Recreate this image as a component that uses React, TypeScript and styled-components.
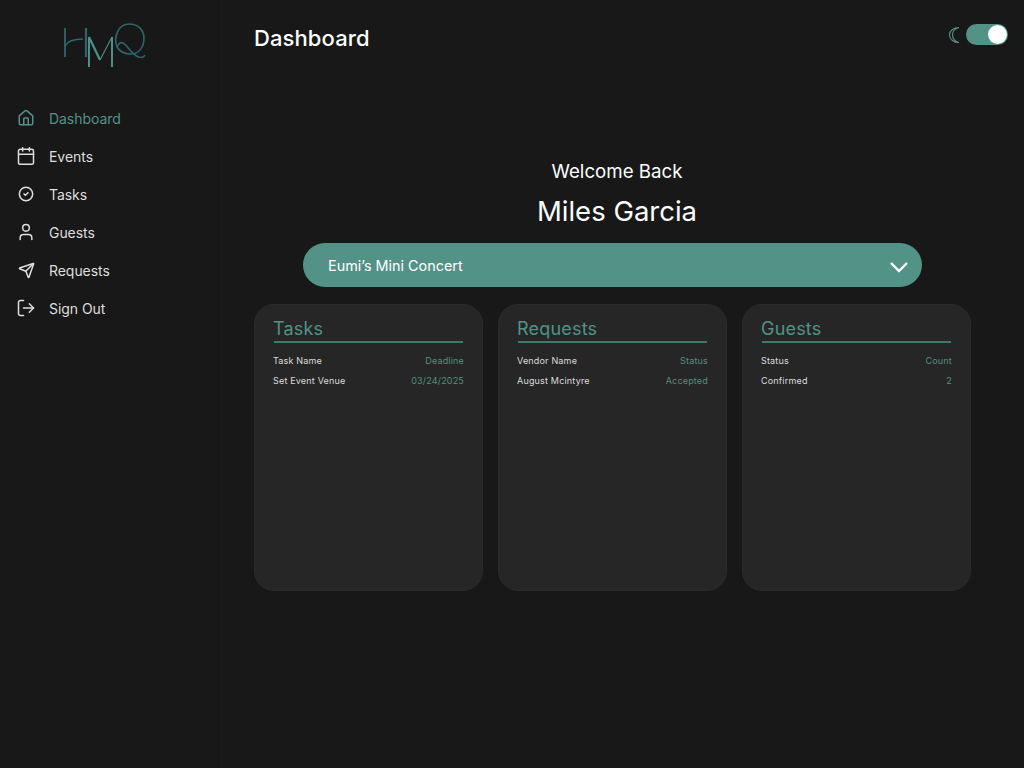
import React from "react";
import styled, { createGlobalStyle } from "styled-components";
import { Home, Calendar, CircleCheck, User, Send, LogOut } from "lucide-react";

const Global = createGlobalStyle`
  html, body { margin: 0; padding: 0; background: #181818; }
  body { font-family: Inter, "Liberation Sans", sans-serif; }
`;

const Page = styled.div`
  width: 1024px;
  height: 768px;
  display: flex;
  overflow: hidden;
  background: #181818;
  color: #fff;
`;

const Sidebar = styled.aside`
  width: 222px;
  flex: none;
  box-sizing: border-box;
  padding-top: 22px;
  border-right: 1px solid #1b1b1b;
`;

const LogoWrap = styled.div`
  display: flex;
  height: 47px;
  padding-left: 63px;
  margin-bottom: 30px;
`;

const Nav = styled.nav`
  display: flex;
  flex-direction: column;
`;

const NavItem = styled.a<{ $active?: boolean }>`
  display: flex;
  align-items: center;
  height: 38px;
  padding-left: 16px;
  gap: 13px;
  font-size: 14px;
  letter-spacing: -0.05px;
  color: ${(p) => (p.$active ? "#539287" : "#dedede")};
`;

const IconSlot = styled.span`
  width: 20px;
  flex: none;
  display: flex;
  justify-content: center;
`;

const Main = styled.main`
  flex: 1;
  min-width: 0;
  display: flex;
  flex-direction: column;
  padding: 0 53px 0 32px;
`;

const Header = styled.header`
  height: 77px;
  display: flex;
  align-items: flex-start;
  justify-content: space-between;
`;

const Title = styled.h1`
  margin: 24px 0 0;
  font-size: 22px;
  line-height: 28px;
  font-weight: 500;
  letter-spacing: 0.1px;
  color: #fff;
`;

const ThemeToggle = styled.div`
  display: flex;
  align-items: center;
  gap: 5px;
  margin: 24px -37px 0 0;
`;

const Moon = styled.span`
  display: flex;
  margin-left: -1px;
`;

const Switch = styled.div`
  width: 42px;
  height: 21px;
  border-radius: 11px;
  background: #539287;
  display: flex;
  justify-content: flex-end;
  align-items: center;
  padding-right: 1px;
  box-sizing: border-box;
`;

const Knob = styled.div`
  width: 19px;
  height: 19px;
  border-radius: 50%;
  background: #fff;
`;

const Welcome = styled.section`
  margin-top: 82px;
  display: flex;
  flex-direction: column;
  align-items: center;
  padding-left: 9px;
`;

const Greeting = styled.div`
  font-size: 18.7px;
  line-height: 26px;
  color: #fff;
`;

const Name = styled.div`
  margin-top: 8px;
  font-size: 27.5px;
  line-height: 36px;
  color: #fff;
`;

const Select = styled.div`
  margin: 14px 0 0 49px;
  width: 619px;
  height: 44px;
  box-sizing: border-box;
  border-radius: 22px;
  background: #539287;
  display: flex;
  align-items: center;
  justify-content: space-between;
  padding: 0 13px 0 25px;
  font-size: 14.4px;
  color: #fff;
`;

const Chevron = styled.svg`
  margin-top: 3px;
`;

const Cards = styled.div`
  margin-top: 17px;
  display: flex;
  gap: 15px;
`;

const Card = styled.div`
  width: 229px;
  height: 287px;
  box-sizing: border-box;
  border-radius: 20px;
  background: #262626;
  border: 1px solid #2b2b2b;
  padding: 12px 18px 0;
`;

const CardTitle = styled.h2`
  margin: 0;
  font-size: 18px;
  line-height: 24px;
  font-weight: 400;
  color: #539287;
  letter-spacing: 0.2px;
`;

const Rule = styled.div`
  height: 2px;
  width: 189px;
  background: #3f766d;
  margin: 0 0 8px 1px;
`;

const Row = styled.div`
  display: flex;
  justify-content: space-between;
  font-size: 9px;
  line-height: 20px;
  color: #dcdcdc;
  letter-spacing: 0.18px;
`;

const RowValue = styled.span`
  color: #50907f;
`;

const Logo = () => (
  <svg width="84" height="47" viewBox="0 0 84 47" fill="none">
    <g stroke="#2f666c">
      <path d="M2 6V35" strokeWidth="1.8" />
      <path d="M2 24C4.5 19 10 17 20 17" strokeWidth="1.5" />
      <path d="M23 6V35" strokeWidth="2.2" />
      <path d="M54 25C50 14 56 2 66 2C76 2 81 9 81 16C81 25 76 32 68 32C62 32 57 30 54 25" strokeWidth="1.6" />
      <path d="M54 25C56 21 58 20 60 21C64 23 66 28 70 31C74 36 80 37 82 33" strokeWidth="1.5" />
    </g>
    <g stroke="#4f8f85">
      <path d="M26 15V45" strokeWidth="2" />
      <path d="M26 15L37 38" strokeWidth="2.2" />
      <path d="M37 38L49 15" strokeWidth="1.1" />
      <path d="M49 15V45" strokeWidth="2" />
    </g>
  </svg>
);

const navItems = [
  { label: "Dashboard", Icon: Home, size: 18, active: true },
  { label: "Events", Icon: Calendar, size: 20 },
  { label: "Tasks", Icon: CircleCheck, size: 16 },
  { label: "Guests", Icon: User, size: 20 },
  { label: "Requests", Icon: Send, size: 17 },
  { label: "Sign Out", Icon: LogOut, size: 20 },
];

const cards = [
  { title: "Tasks", rows: [["Task Name", "Deadline"], ["Set Event Venue", "03/24/2025"]] },
  { title: "Requests", rows: [["Vendor Name", "Status"], ["August Mcintyre", "Accepted"]] },
  { title: "Guests", rows: [["Status", "Count"], ["Confirmed", "2"]] },
];

export default function App() {
  return (
    <Page>
      <Global />
      <Sidebar>
        <LogoWrap><Logo /></LogoWrap>
        <Nav>
          {navItems.map(({ label, Icon, size, active }) => (
            <NavItem key={label} $active={active}>
              <IconSlot>
                <Icon size={size} strokeWidth={1.5} absoluteStrokeWidth />
              </IconSlot>
              {label}
            </NavItem>
          ))}
        </Nav>
      </Sidebar>
      <Main>
        <Header>
          <Title>Dashboard</Title>
          <ThemeToggle>
            <Moon>
              <svg width="13" height="18" viewBox="0 0 13 18" fill="none" stroke="#539287" strokeWidth="1.1">
                <path d="M11 1.5C6 1.5 1.5 4.5 1.5 9C1.5 13.5 6 16.5 11 16.5C7.5 15.5 4.5 13 4.5 9C4.5 5 7.5 2.5 11 1.5Z" />
              </svg>
            </Moon>
            <Switch><Knob /></Switch>
          </ThemeToggle>
        </Header>
        <Welcome>
          <Greeting>Welcome Back</Greeting>
          <Name>Miles Garcia</Name>
        </Welcome>
        <Select>
          Eumi’s Mini Concert
          <Chevron width="20" height="12" viewBox="0 0 20 12" fill="none" stroke="#fff" strokeWidth="2.4">
            <path d="M2 2L10 10L18 2" />
          </Chevron>
        </Select>
        <Cards>
          {cards.map((c) => (
            <Card key={c.title}>
              <CardTitle>{c.title}</CardTitle>
              <Rule />
              {c.rows.map(([a, b]) => (
                <Row key={a}>
                  <span>{a}</span>
                  <RowValue>{b}</RowValue>
                </Row>
              ))}
            </Card>
          ))}
        </Cards>
      </Main>
    </Page>
  );
}
